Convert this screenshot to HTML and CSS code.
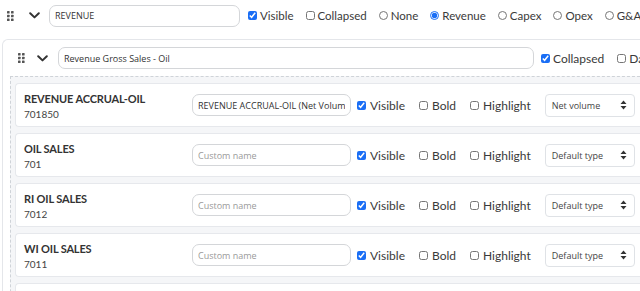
FILE: index.html
```html
<!DOCTYPE html>
<html>
<head>
<meta charset="utf-8">
<link rel="stylesheet" href="styles.css">
</head>
<body>
<div class="top-row">
  <svg class="drag" width="7" height="10" viewBox="0 0 7 10"><g fill="#555"><rect x="0" y="0" width="2.6" height="2.6" rx="0.6"/><rect x="4" y="0" width="2.6" height="2.6" rx="0.6"/><rect x="0" y="3.7" width="2.6" height="2.6" rx="0.6"/><rect x="4" y="3.7" width="2.6" height="2.6" rx="0.6"/><rect x="0" y="7.4" width="2.6" height="2.6" rx="0.6"/><rect x="4" y="7.4" width="2.6" height="2.6" rx="0.6"/></g></svg>
  <svg class="chev" width="11" height="7" viewBox="0 0 11 7"><path d="M1.2 1.2 L5.5 5.4 L9.8 1.2" fill="none" stroke="#333" stroke-width="2" stroke-linecap="round" stroke-linejoin="round"/></svg>
  <input class="name top-name" type="text" value="REVENUE">
  <label class="opt"><input type="checkbox" checked>Visible</label>
  <label class="opt"><input type="checkbox">Collapsed</label>
  <label class="opt"><input type="radio" name="cat">None</label>
  <label class="opt"><input type="radio" name="cat" checked>Revenue</label>
  <label class="opt"><input type="radio" name="cat">Capex</label>
  <label class="opt"><input type="radio" name="cat">Opex</label>
  <label class="opt"><input type="radio" name="cat">G&amp;A</label>
</div>

<div class="group">
  <div class="group-head">
    <svg class="drag" width="7" height="10" viewBox="0 0 7 10"><g fill="#555"><rect x="0" y="0" width="2.6" height="2.6" rx="0.6"/><rect x="4" y="0" width="2.6" height="2.6" rx="0.6"/><rect x="0" y="3.7" width="2.6" height="2.6" rx="0.6"/><rect x="4" y="3.7" width="2.6" height="2.6" rx="0.6"/><rect x="0" y="7.4" width="2.6" height="2.6" rx="0.6"/><rect x="4" y="7.4" width="2.6" height="2.6" rx="0.6"/></g></svg>
    <svg class="chev" width="11" height="7" viewBox="0 0 11 7"><path d="M1.2 1.2 L5.5 5.4 L9.8 1.2" fill="none" stroke="#333" stroke-width="2" stroke-linecap="round" stroke-linejoin="round"/></svg>
    <input class="name group-name" type="text" value="Revenue Gross Sales - Oil">
    <label class="opt"><input type="checkbox" checked>Collapsed</label>
    <label class="opt"><input type="checkbox">Data</label>
  </div>
  <div class="items">
    <div class="item">
      <div class="title"><div class="t">REVENUE ACCRUAL-OIL</div><div class="code">701850</div></div>
      <input class="name item-name" type="text" value="REVENUE ACCRUAL-OIL (Net Volume)">
      <label class="opt"><input type="checkbox" checked>Visible</label>
      <label class="opt"><input type="checkbox">Bold</label>
      <label class="opt"><input type="checkbox">Highlight</label>
      <div class="sel"><span>Net volume</span><svg width="7" height="10" viewBox="0 0 7 10"><path d="M3.5 0.5 L6.5 4 H0.5Z M3.5 9.5 L6.5 6 H0.5Z" fill="#333"/></svg></div>
    </div>
    <div class="item">
      <div class="title"><div class="t">OIL SALES</div><div class="code">701</div></div>
      <input class="name item-name" type="text" placeholder="Custom name">
      <label class="opt"><input type="checkbox" checked>Visible</label>
      <label class="opt"><input type="checkbox">Bold</label>
      <label class="opt"><input type="checkbox">Highlight</label>
      <div class="sel"><span>Default type</span><svg width="7" height="10" viewBox="0 0 7 10"><path d="M3.5 0.5 L6.5 4 H0.5Z M3.5 9.5 L6.5 6 H0.5Z" fill="#333"/></svg></div>
    </div>
    <div class="item">
      <div class="title"><div class="t">RI OIL SALES</div><div class="code">7012</div></div>
      <input class="name item-name" type="text" placeholder="Custom name">
      <label class="opt"><input type="checkbox" checked>Visible</label>
      <label class="opt"><input type="checkbox">Bold</label>
      <label class="opt"><input type="checkbox">Highlight</label>
      <div class="sel"><span>Default type</span><svg width="7" height="10" viewBox="0 0 7 10"><path d="M3.5 0.5 L6.5 4 H0.5Z M3.5 9.5 L6.5 6 H0.5Z" fill="#333"/></svg></div>
    </div>
    <div class="item">
      <div class="title"><div class="t">WI OIL SALES</div><div class="code">7011</div></div>
      <input class="name item-name" type="text" placeholder="Custom name">
      <label class="opt"><input type="checkbox" checked>Visible</label>
      <label class="opt"><input type="checkbox">Bold</label>
      <label class="opt"><input type="checkbox">Highlight</label>
      <div class="sel"><span>Default type</span><svg width="7" height="10" viewBox="0 0 7 10"><path d="M3.5 0.5 L6.5 4 H0.5Z M3.5 9.5 L6.5 6 H0.5Z" fill="#333"/></svg></div>
    </div>
    <div class="item"></div>
  </div>
</div>
</body>
</html>
```

FILE: styles.css
```css
html, body {
  margin: 0;
  padding: 0;
  background: #fff;
  overflow: hidden;
}
body {
  font-family: Lato, "Open Sans", sans-serif;
  color: #3a3a3a;
  width: 640px;
  height: 291px;
}
.top-row {
  display: flex;
  align-items: center;
  height: 31px;
  padding-left: 7px;
  white-space: nowrap;
  overflow: hidden;
}
.drag { flex: none; }
.chev { flex: none; margin-left: 15px; margin-right: 9px; }
.name {
  box-sizing: border-box;
  height: 22px;
  border: 1px solid #d4d6d9;
  border-radius: 7px;
  font-family: "Open Sans", sans-serif;
  font-size: 9px;
  color: #333;
  padding: 0 5px;
  outline: none;
  background: #fff;
  flex: none;
}
.name::placeholder { color: #9a9a9a; }
.top-name { width: 191px; margin-right: 8px; }
.opt {
  display: flex;
  align-items: center;
  font-size: 12px;
  margin-right: 13px;
  flex: none;
  white-space: nowrap;
}
.top-row .opt { font-size: 11.5px; margin-right: 12px; }
.opt input {
  margin: 0 3px 0 0;
  width: 9px;
  height: 9px;
  accent-color: #1a6ef5;
}
.group {
  margin: 8px 0 0 2px;
  border: 1px solid #e4e6ea;
  border-right: none;
  border-radius: 6px 0 0 0;
  padding: 7px 0 0 7px;
}
.group-head {
  display: flex;
  align-items: center;
  white-space: nowrap;
  overflow: hidden;
  padding-left: 8px;
}
.group-head .chev { margin-left: 12px; margin-right: 10px; }
.group-name { width: 476px; margin-right: 7px; }
.items {
  margin-top: 7px;
  border-top: 1px dashed #cfd3d8;
  border-left: 1px dashed #cfd3d8;
  background: #f5f6f8;
  padding: 6px 0 0 4px;
  display: flex;
  flex-direction: column;
  gap: 6px;
}
.item {
  display: flex;
  align-items: center;
  height: 44px;
  box-sizing: border-box;
  background: #fff;
  border: 1px solid #e6e8ec;
  border-right: none;
  border-radius: 4px 0 0 4px;
  padding-left: 8px;
  white-space: nowrap;
  flex: none;
}
.title {
  width: 168px;
  flex: none;
  margin-top: 2px;
}
.t {
  font-size: 11px;
  font-weight: 700;
  letter-spacing: -0.15px;
  line-height: 15px;
  color: #333;
}
.code {
  font-size: 10px;
  line-height: 14px;
  margin-top: 1px;
  color: #444;
}
.item-name { width: 159px; margin-right: 6px; }
.item .opt { margin-right: 14px; }
.item .opt input { margin-right: 4px; }
.sel {
  flex: none;
  box-sizing: border-box;
  width: 90px;
  height: 23px;
  border: 1px solid #dfe2e6;
  border-radius: 4px;
  margin-left: 0;
  display: flex;
  align-items: center;
  justify-content: space-between;
  padding: 0 7px 0 6px;
  font-family: "Open Sans", sans-serif;
  font-size: 9px;
  color: #444;
}
```
